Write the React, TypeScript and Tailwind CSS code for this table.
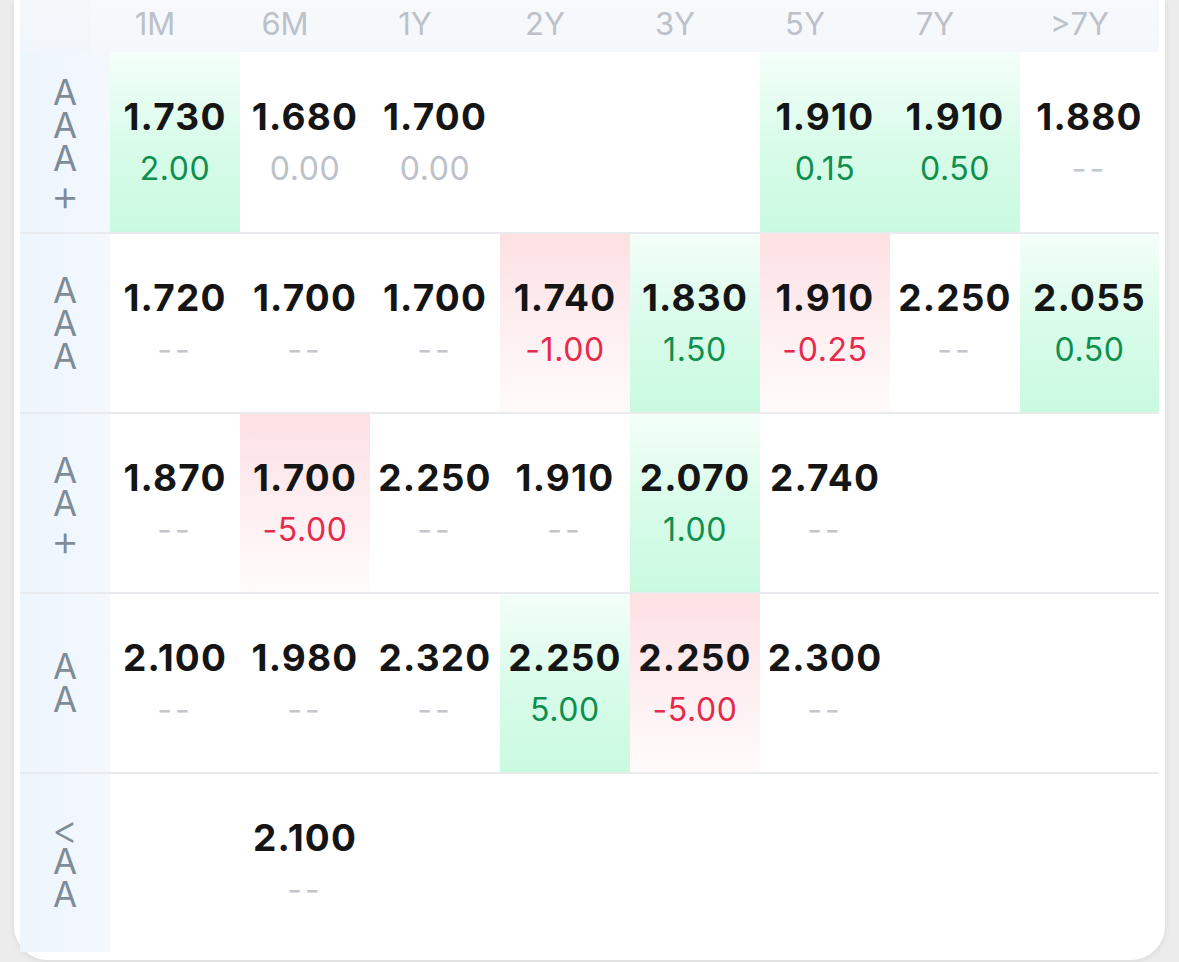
import React from 'react';

type Tone = 'up' | 'down' | 'zero' | 'none';
type Cell = null | { v: string; d: string; t: Tone };

const cols = ['1M', '6M', '1Y', '2Y', '3Y', '5Y', '7Y', '>7Y'];

const c = (v: string, d: string, t: Tone): Cell => ({ v, d, t });

const rows: { label: string[]; cells: Cell[] }[] = [
  {
    label: ['A', 'A', 'A', '+'],
    cells: [
      c('1.730', '2.00', 'up'),
      c('1.680', '0.00', 'zero'),
      c('1.700', '0.00', 'zero'),
      null,
      null,
      c('1.910', '0.15', 'up'),
      c('1.910', '0.50', 'up'),
      c('1.880', '--', 'none'),
    ],
  },
  {
    label: ['A', 'A', 'A'],
    cells: [
      c('1.720', '--', 'none'),
      c('1.700', '--', 'none'),
      c('1.700', '--', 'none'),
      c('1.740', '-1.00', 'down'),
      c('1.830', '1.50', 'up'),
      c('1.910', '-0.25', 'down'),
      c('2.250', '--', 'none'),
      c('2.055', '0.50', 'up'),
    ],
  },
  {
    label: ['A', 'A', '+'],
    cells: [
      c('1.870', '--', 'none'),
      c('1.700', '-5.00', 'down'),
      c('2.250', '--', 'none'),
      c('1.910', '--', 'none'),
      c('2.070', '1.00', 'up'),
      c('2.740', '--', 'none'),
      null,
      null,
    ],
  },
  {
    label: ['A', 'A'],
    cells: [
      c('2.100', '--', 'none'),
      c('1.980', '--', 'none'),
      c('2.320', '--', 'none'),
      c('2.250', '5.00', 'up'),
      c('2.250', '-5.00', 'down'),
      c('2.300', '--', 'none'),
      null,
      null,
    ],
  },
  {
    label: ['<', 'A', 'A'],
    cells: [null, c('2.100', '--', 'none'), null, null, null, null, null, null],
  },
];

function CellView({ cell }: { cell: Cell }) {
  if (!cell) return <div />;
  const bg =
    cell.t === 'up'
      ? 'bg-linear-to-b from-[#f4fef9] via-[#d9fcea] to-[#c9fae0]'
      : cell.t === 'down'
      ? 'bg-linear-to-b from-[#fde0e4] via-[#fdeef0] to-[#fffbfb]'
      : '';
  const sub =
    cell.t === 'up'
      ? 'text-[#0f8f4e]'
      : cell.t === 'down'
      ? 'text-[#e62a4c]'
      : 'text-[#bcc1c8]';
  return (
    <div className={`flex flex-col items-center justify-center ${bg}`}>
      <div className="text-[37px] leading-[44px] font-bold text-[#151515] tracking-[1.2px]">
        {cell.v}
      </div>
      <div className={`mt-[10px] text-[32px] leading-[40px] font-normal tracking-[0.6px] ${sub}`}>
        {cell.d === '--' ? <span className="tracking-[3px] text-[#c3c7cd]">--</span> : cell.d}
      </div>
    </div>
  );
}

function LabelChar({ ch }: { ch: string }) {
  if (ch === '+')
    return <span className="h-[33px] pt-[4px] text-[44px] leading-[33px] font-light">+</span>;
  if (ch === '<')
    return <span className="h-[30px] text-[40px] leading-[30px] font-light">&lt;</span>;
  return <span className="h-[33px] text-[35px] leading-[33px]">{ch}</span>;
}

export default function App() {
  return (
    <div
      className="w-[1179px] h-[962px] bg-[#ececec] overflow-hidden"
      style={{ fontFamily: 'Inter, "Noto Sans", "Liberation Sans", sans-serif' }}
    >
      <div className="mx-[14px] bg-white rounded-b-[34px] px-[6px] pb-[8px] shadow-[0_2px_6px_rgba(0,0,0,0.08)]">
        {/* header */}
        <div className="h-[52px] grid grid-cols-[70px_repeat(7,130px)_1fr] bg-linear-to-b from-[#f7f9fb] to-[#f4f8fc]">
          <div className="bg-linear-to-b from-[#f5f8fb] to-[#f1f6fc]" />
          {cols.map((h) => (
            <div
              key={h}
              className="flex justify-center pt-[5px] text-[31px] leading-[38px] font-normal text-[#bcc1c9]"
            >
              {h}
            </div>
          ))}
        </div>
        {/* rows */}
        {rows.map((r, i) => (
          <div
            key={i}
            className={`h-[180px] grid grid-cols-[90px_repeat(7,130px)_1fr] ${
              i > 0 ? 'border-t-2 border-[#e8eaed]' : ''
            }`}
          >
            <div className="flex flex-col items-center justify-center bg-linear-to-r from-[#edf5fd] to-[#f4f8fe] text-[#7f8c97] font-normal">
              {r.label.map((ch, k) => (
                <LabelChar key={k} ch={ch} />
              ))}
            </div>
            {r.cells.map((cell, k) => (
              <CellView key={k} cell={cell} />
            ))}
          </div>
        ))}
      </div>
    </div>
  );
}
